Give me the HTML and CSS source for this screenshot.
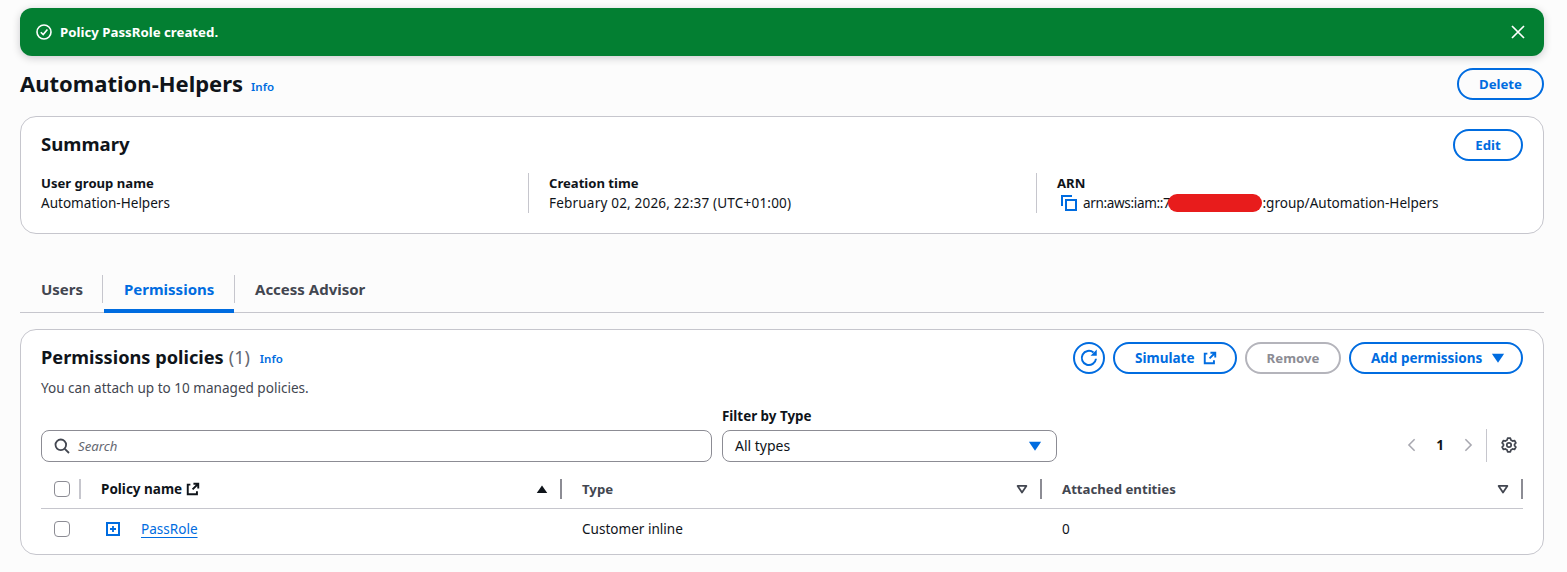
FILE: index.html
```html
<!DOCTYPE html>
<html lang="en">
<head>
<meta charset="utf-8">
<title>Automation-Helpers</title>
<link rel="stylesheet" href="styles.css">
</head>
<body>
<div class="page">
  <div class="flash">
    <svg class="flash-icon" viewBox="0 0 16 16"><circle cx="8" cy="8" r="7"/><path d="M4.8 8.2 7.2 10.6 11.4 5.6"/></svg>
    <span class="flash-text">Policy PassRole created.</span>
    <svg class="flash-close" viewBox="0 0 16 16"><path d="M2 2 14 14M14 2 2 14"/></svg>
  </div>

  <header class="page-head">
    <h1>Automation-Helpers</h1>
    <a class="info info-h1">Info</a>
    <button class="btn btn-delete">Delete</button>
  </header>

  <section class="card summary">
    <div class="card-head">
      <h2 class="summary-title">Summary</h2>
      <button class="btn btn-edit">Edit</button>
    </div>
    <div class="cols">
      <div class="col">
        <div class="label">User group name</div>
        <div class="value">Automation-Helpers</div>
      </div>
      <div class="col col-sep">
        <div class="label">Creation time</div>
        <div class="value value-date">February 02, 2026, 22:37 (UTC+01:00)</div>
      </div>
      <div class="col col-sep">
        <div class="label">ARN</div>
        <div class="value arn">
          <svg class="copy" viewBox="0 0 16 16"><path d="M1 11V1H11"/><rect x="5" y="5" width="10" height="10"/></svg>
          <span><span class="arn-prefix">arn:aws:iam::7</span><span class="redact"></span>:group/Automation-Helpers</span>
        </div>
      </div>
    </div>
  </section>

  <nav class="tabs">
    <a class="tab tab-users">Users</a>
    <a class="tab tab-perm">Permissions</a>
    <a class="tab tab-access">Access Advisor</a>
  </nav>

  <section class="card policies">
    <div class="pol-head">
      <div class="pol-title">
        <div class="pol-title-row">
          <h2>Permissions policies</h2>
          <span class="count">(1)</span>
          <a class="info">Info</a>
        </div>
        <p class="hint">You can attach up to 10 managed policies.</p>
      </div>
      <div class="actions">
        <button class="btn btn-icon" aria-label="Refresh">
          <svg viewBox="0 0 16 16"><path class="s2" d="M13.6 8.6A5.7 5.7 0 1 1 11.6 3.6"/><path class="f" d="M9.2 6.2 14.2 6.2V1.2Z"/></svg>
        </button>
        <button class="btn btn-sim">Simulate
          <svg class="ext" viewBox="0 0 16 16"><path d="M5 3H2V14H12.5V10.5"/><path d="M7.5 8.5 14 2M8.5 2H14V7.5"/></svg>
        </button>
        <button class="btn btn-remove" disabled>Remove</button>
        <button class="btn btn-add">Add permissions
          <svg class="caret" viewBox="0 0 16 16"><path d="M1 3H15L8 13.5Z"/></svg>
        </button>
      </div>
    </div>

    <div class="filters">
      <label class="search">
        <svg viewBox="0 0 16 16"><circle cx="6.8" cy="6.8" r="5.3"/><path d="M10.8 10.8 15 15"/></svg>
        <span>Search</span>
      </label>
      <div class="filter-type">
        <div class="filter-label">Filter by Type</div>
        <div class="select">
          <span>All types</span>
          <svg viewBox="0 0 16 16"><path d="M1 3H15L8 13.5Z"/></svg>
        </div>
      </div>
      <div class="pager">
        <svg class="chev" viewBox="0 0 16 16"><path d="M11 1.5 4.5 8 11 14.5"/></svg>
        <span class="page-no">1</span>
        <svg class="chev" viewBox="0 0 16 16"><path d="M5 1.5 11.5 8 5 14.5"/></svg>
        <span class="pager-sep"></span>
        <svg class="gear" viewBox="0 0 16 16"><path d="M6.6 1.2H9.4L9.9 3.1 11.6 4.1 13.5 3.5 14.9 6 13.5 7.4V8.6L14.9 10 13.5 12.5 11.6 11.9 9.9 12.9 9.4 14.8H6.6L6.1 12.9 4.4 11.9 2.5 12.5 1.1 10 2.5 8.6V7.4L1.1 6 2.5 3.5 4.4 4.1 6.1 3.1Z"/><circle cx="8" cy="8" r="2.2"/></svg>
      </div>
    </div>

    <div class="table">
      <div class="thead">
        <div class="cell check"><span class="box"></span></div>
        <div class="cell th">
          <span class="th-name">Policy name</span>
          <svg class="ext ext-dark" viewBox="0 0 16 16"><path d="M5 3H2V14H12.5V10.5"/><path d="M7.5 8.5 14 2M8.5 2H14V7.5"/></svg>
          <svg class="sort sort-on" viewBox="0 0 16 16"><path d="M2 12.5H14L8 4Z"/></svg>
        </div>
        <div class="cell th">
          <span class="th-muted">Type</span>
          <svg class="sort" viewBox="0 0 16 16"><path d="M3 4.5H13L8 12Z"/></svg>
        </div>
        <div class="cell th">
          <span class="th-muted">Attached entities</span>
          <svg class="sort" viewBox="0 0 16 16"><path d="M3 4.5H13L8 12Z"/></svg>
        </div>
      </div>
      <div class="trow">
        <div class="cell check"><span class="box"></span></div>
        <div class="cell name">
          <svg class="expand" viewBox="0 0 14 14"><rect x="1" y="1" width="12" height="12"/><path d="M7 4V10M4 7H10"/></svg>
          <a class="link">PassRole</a>
        </div>
        <div class="cell td">Customer inline</div>
        <div class="cell td">0</div>
      </div>
    </div>
  </section>
</div>
</body>
</html>
```

FILE: styles.css
```css
* { box-sizing: border-box; }
html, body { margin: 0; height: 100%; }
body {
  background: #fcfcfc;
  color: #0f141a;
  font-family: "Noto Sans", "Open Sans", sans-serif;
  font-size: 13.55px;
  line-height: 20px;
  overflow: hidden;
}
.page { padding: 8px 23px 0 20px; }
h1, h2, p { margin: 0; }
svg { display: block; flex: none; fill: none; }

.flash {
  display: flex;
  align-items: center;
  height: 48px;
  padding: 0 18px 0 16px;
  background: #037f32;
  border-radius: 12px;
  box-shadow: 0 2px 8px rgba(0, 7, 22, .2);
  color: #fff;
}
.flash-icon { width: 16px; height: 16px; stroke: #fff; stroke-width: 1.6; }
.flash-text { margin-left: 8px; font-weight: 700; font-size: 13.25px; }
.flash-close { width: 16px; height: 16px; margin-left: auto; stroke: #fff; stroke-width: 1.7; }

.page-head { display: flex; align-items: center; height: 32px; margin-top: 12px; }
h1 { font-size: 22px; line-height: 30px; font-weight: 700; margin-bottom: 2px; }
.info { color: #006ce0; font-size: 11.5px; font-weight: 600; }
.info-h1 { margin: 5px 0 0 8px; }

.btn {
  display: inline-flex;
  align-items: center;
  justify-content: center;
  height: 32px;
  background: transparent;
  border: 2px solid #006ce0;
  border-radius: 20px;
  color: #006ce0;
  font: 700 13.2px/20px "Noto Sans", "Open Sans", sans-serif;
  padding: 0;
}
.btn-delete { width: 87px; margin-left: auto; }
.btn-edit { width: 70px; }

.card { background: #fff; border: 1px solid #c6c6cd; border-radius: 16px; }
.summary { height: 118px; margin-top: 16px; padding: 12px 20px 0; }
.card-head { display: flex; justify-content: space-between; align-items: center; }
h2 { font-size: 18.2px; line-height: 30px; font-weight: 700; }
.summary-title { font-size: 18.6px; margin-bottom: 2px; }
.cols { display: grid; grid-template-columns: 487px 508px 1fr; margin-top: 12px; }
.col-sep { border-left: 1px solid #c6c6cd; padding-left: 20px; }
.label { font-weight: 700; font-size: 13.1px; }
.value { color: #0f141a; }
.value-date { letter-spacing: .18px; }
.arn { display: flex; align-items: center; gap: 6px; margin-left: 4px; }
.arn-prefix { letter-spacing: -.35px; }
.copy { width: 16px; height: 16px; stroke: #006ce0; stroke-width: 2; }
.redact {
  display: inline-block;
  width: 94px;
  height: 18px;
  margin-left: -2px;
  background: #e81c1c;
  border-radius: 9px;
  vertical-align: -4px;
}

.tabs { display: flex; height: 38px; margin-top: 41px; border-bottom: 1px solid #c6c6cd; }
.tab { position: relative; padding-top: 3px; height: 38px; font-size: 15px; line-height: 22px; font-weight: 700; color: #424650; }
.tab-users { width: 82px; padding-left: 21px; }
.tab-perm {
  width: 133px;
  padding-left: 22px;
  color: #006ce0;
  background: linear-gradient(#006ce0, #006ce0) 2px 100% / 130px 4px no-repeat;
}
.tab-access { padding-left: 20px; }
.tab-perm::before, .tab-perm::after {
  content: "";
  position: absolute;
  top: 0;
  height: 28px;
  width: 1px;
  background: #c6c6cd;
}
.tab-perm::before { left: 0; }
.tab-perm::after { right: 0; }

.policies { height: 226px; margin-top: 16px; padding: 12px 20px 0; }
.pol-head { display: flex; justify-content: space-between; }
.pol-title-row { display: flex; align-items: center; height: 30px; }
.count { margin-left: 5px; font-size: 18px; color: #656871; }
.pol-title-row .info { margin: 4px 0 0 10px; }
.hint { margin-top: 6px; color: #424650; }
.actions { display: flex; align-items: flex-start; gap: 8px; }
.btn-icon { width: 32px; }
.btn-icon svg { width: 20px; height: 20px; }
.s2 { stroke: #006ce0; stroke-width: 1.6; }
.f { fill: #006ce0; }
.btn-sim { width: 124px; gap: 9px; justify-content: flex-start; padding-left: 20px; font-size: 13.5px; }
.ext { width: 14px; height: 14px; stroke: #006ce0; stroke-width: 2.2; }
.ext-dark { stroke: #0f141a; margin-left: 4px; }
.btn-remove { width: 96px; border-color: #b4b4bb; color: #8c8c94; }
.btn-add { width: 174px; gap: 9px; justify-content: flex-start; padding-left: 20px; font-size: 13.5px; }
.caret { width: 14px; height: 14px; fill: #006ce0; }

.filters { display: flex; align-items: flex-end; margin-top: 8px; }
.search {
  display: flex;
  align-items: center;
  gap: 8px;
  width: 671px;
  height: 32px;
  padding-left: 12px;
  border: 1px solid #8c8c94;
  border-radius: 8px;
  color: #656871;
  font-style: italic;
  font-size: 13.2px;
}
.search svg { width: 16px; height: 16px; stroke: #424650; stroke-width: 1.8; }
.filter-type { width: 335px; margin-left: 10px; }
.filter-label { font-weight: 700; margin-bottom: 4px; font-size: 13.4px; }
.select {
  display: flex;
  align-items: center;
  justify-content: space-between;
  height: 32px;
  padding: 0 14px 0 12px;
  border: 1px solid #8c8c94;
  border-radius: 8px;
  font-size: 14px;
}
.select svg { width: 14px; height: 14px; fill: #006ce0; }
.pager { display: flex; align-items: center; height: 34px; margin-left: auto; margin-right: 6px; }
.chev { width: 14px; height: 14px; stroke: #a8a8b0; stroke-width: 1.8; }
.page-no { width: 42px; text-align: center; font-weight: 700; }
.pager-sep { width: 1px; height: 33px; margin: 0 14px 0 11px; background: #c6c6cd; }
.gear { width: 16px; height: 16px; stroke: #424650; stroke-width: 1.7; stroke-linejoin: round; }

.table { margin-top: 8px; }
.thead, .trow { display: grid; grid-template-columns: 40px 481px 480px 481px; align-items: center; }
.thead { height: 39px; border-bottom: 1px solid #c6c6cd; }
.trow { height: 40px; }
.cell { display: flex; align-items: center; }
.check { padding-left: 13px; }
.thead .check { height: 20px; border-right: 2px solid #c6c6cd; }
.box { width: 16px; height: 16px; border: 1px solid #8c8c94; border-radius: 4px; background: #fff; }
.th { height: 20px; padding-left: 20px; font-weight: 700; border-right: 2px solid #8c8c94; font-size: 13.2px; }
.th-name { font-size: 13.5px; }
.th-muted { color: #424650; }
.sort { width: 14px; height: 14px; margin-left: auto; margin-right: 11px; stroke: #424650; stroke-width: 2; stroke-linejoin: round; }
.sort-on { fill: #0f141a; stroke: #0f141a; stroke-width: 0; }
.name { padding-left: 25px; gap: 21px; }
.expand { width: 14px; height: 14px; stroke: #006ce0; }
.expand rect { stroke-width: 2; }
.expand path { stroke-width: 1.8; }
.link { color: #006ce0; text-decoration: underline; text-underline-offset: 3px; text-decoration-thickness: 1px; }
.td { padding-left: 20px; color: #0f141a; }
```
